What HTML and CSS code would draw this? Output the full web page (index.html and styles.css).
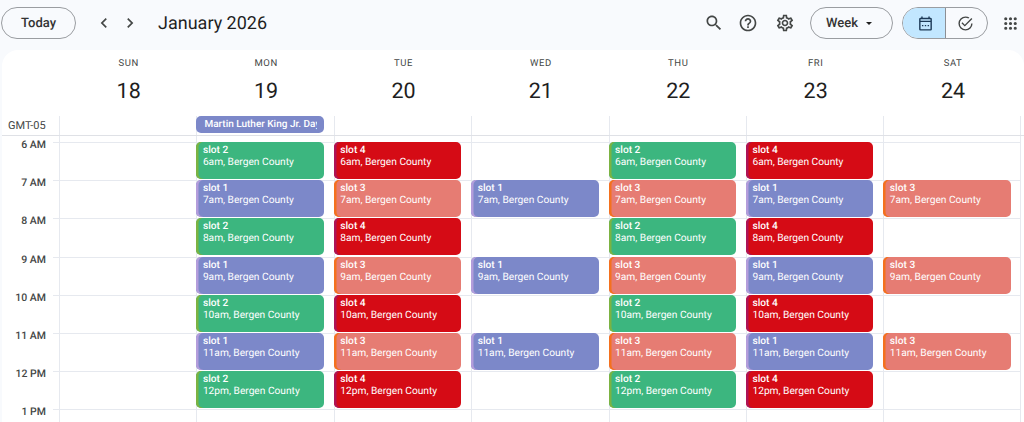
FILE: index.html
```html
<!DOCTYPE html>
<html lang="en">
  <head>
    <meta charset="UTF-8" />
    <title>January 2026</title>
    <link rel="stylesheet" href="styles.css">
  </head>
  <body>
    <header class="topbar">
      <button class="pill today">Today</button>
      <div class="nav">
        <svg viewBox="0 0 24 24"><path d="M15.41 7.41 14 6l-6 6 6 6 1.41-1.41L10.83 12z"/></svg>
        <svg viewBox="0 0 24 24"><path d="M10 6 8.59 7.41 13.17 12l-4.58 4.59L10 18l6-6z"/></svg>
      </div>
      <h1 class="title">January 2026</h1>
      <div class="tools">
        <svg class="search" viewBox="0 0 24 24"><path d="M15.5 14h-.79l-.28-.27C15.41 12.59 16 11.11 16 9.5 16 5.91 13.09 3 9.5 3S3 5.91 3 9.5 5.91 16 9.5 16c1.61 0 3.09-.59 4.23-1.57l.27.28v.79l5 4.99L20.49 19l-4.99-5zm-6 0C7.01 14 5 11.99 5 9.5S7.01 5 9.5 5 14 7.01 14 9.5 11.99 14 9.5 14z"/></svg>
        <svg viewBox="0 0 24 24"><path d="M11 18h2v-2h-2v2zm1-16C6.48 2 2 6.48 2 12s4.48 10 10 10 10-4.48 10-10S17.52 2 12 2zm0 18c-4.41 0-8-3.59-8-8s3.59-8 8-8 8 3.59 8 8-3.59 8-8 8zm0-14c-2.21 0-4 1.79-4 4h2c0-1.1.9-2 2-2s2 .9 2 2c0 2-3 1.75-3 5h2c0-2.25 3-2.5 3-5 0-2.21-1.79-4-4-4z"/></svg>
        <svg class="gear" viewBox="0 0 24 24"><path d="M19.43 12.98c.04-.32.07-.64.07-.98 0-.34-.03-.66-.07-.98l2.11-1.65c.19-.15.24-.42.12-.64l-2-3.46c-.09-.16-.26-.25-.44-.25-.06 0-.12.01-.17.03l-2.49 1c-.52-.4-1.08-.73-1.69-.98l-.38-2.65C14.46 2.18 14.25 2 14 2h-4c-.25 0-.46.18-.49.42l-.38 2.65c-.61.25-1.17.59-1.69.98l-2.49-1c-.06-.02-.12-.03-.18-.03-.17 0-.34.09-.43.25l-2 3.46c-.13.22-.07.49.12.64l2.11 1.65c-.04.32-.07.65-.07.98 0 .33.03.66.07.98l-2.11 1.65c-.19.15-.24.42-.12.64l2 3.46c.09.16.26.25.44.25.06 0 .12-.01.17-.03l2.49-1c.52.4 1.08.73 1.69.98l.38 2.65c.03.24.24.42.49.42h4c.25 0 .46-.18.49-.42l.38-2.65c.61-.25 1.17-.59 1.69-.98l2.49 1c.06.02.12.03.18.03.17 0 .34-.09.43-.25l2-3.46c.12-.22.07-.49-.12-.64l-2.11-1.65zm-1.98-1.71c.04.31.05.52.05.73 0 .21-.02.43-.05.73l-.14 1.13.89.7 1.08.84-.7 1.21-1.27-.51-1.04-.42-.9.68c-.43.32-.84.56-1.25.73l-1.06.43-.16 1.13-.2 1.35h-1.4l-.19-1.35-.16-1.13-1.06-.43c-.43-.18-.83-.41-1.23-.71l-.91-.7-1.06.43-1.27.51-.7-1.21 1.08-.84.89-.7-.14-1.13c-.03-.31-.05-.54-.05-.74s.02-.43.05-.73l.14-1.13-.89-.7-1.08-.84.7-1.21 1.27.51 1.04.42.9-.68c.43-.32.84-.56 1.25-.73l1.06-.43.16-1.13.2-1.35h1.39l.19 1.35.16 1.13 1.06.43c.43.18.83.41 1.23.71l.91.7 1.06-.43 1.27-.51.7 1.21-1.07.85-.89.7.14 1.13zM12 8c-2.21 0-4 1.79-4 4s1.79 4 4 4 4-1.79 4-4-1.79-4-4-4zm0 6c-1.1 0-2-.9-2-2s.9-2 2-2 2 .9 2 2-.9 2-2 2z"/></svg>
      </div>
      <button class="pill week">Week <span class="caret"></span></button>
      <div class="toggle">
        <span class="toggle-on">
          <svg viewBox="0 0 24 24"><path d="M19 4h-1V2h-2v2H8V2H6v2H5a2 2 0 0 0-2 2v14a2 2 0 0 0 2 2h14a2 2 0 0 0 2-2V6a2 2 0 0 0-2-2zm0 16H5V10h14v10zm0-12H5V6h14v2zM7 14h2v2H7zm4 0h2v2h-2zm4 0h2v2h-2z"/></svg>
        </span>
        <span class="toggle-off">
          <svg viewBox="0 0 24 24"><path d="M12 2a10 10 0 1 0 10 10h-2a8 8 0 1 1-8-8c1.5 0 2.9.4 4.1 1.1l1.4-1.5A10 10 0 0 0 12 2zm8.3 2.3L11 13.6l-3.3-3.3-1.4 1.4 4.7 4.7L21.7 5.7z"/></svg>
        </span>
      </div>
      <svg class="apps" viewBox="0 0 24 24"><path d="M6 8a2 2 0 1 0 0-4 2 2 0 0 0 0 4zm6 0a2 2 0 1 0 0-4 2 2 0 0 0 0 4zm6 0a2 2 0 1 0 0-4 2 2 0 0 0 0 4zM6 14a2 2 0 1 0 0-4 2 2 0 0 0 0 4zm6 0a2 2 0 1 0 0-4 2 2 0 0 0 0 4zm6 0a2 2 0 1 0 0-4 2 2 0 0 0 0 4zM6 20a2 2 0 1 0 0-4 2 2 0 0 0 0 4zm6 0a2 2 0 1 0 0-4 2 2 0 0 0 0 4zm6 0a2 2 0 1 0 0-4 2 2 0 0 0 0 4z"/></svg>
    </header>

    <main class="card">
      <div class="days">
        <div class="day-head"><span class="dow">SUN</span><span class="dom">18</span></div>
        <div class="day-head"><span class="dow">MON</span><span class="dom">19</span></div>
        <div class="day-head"><span class="dow">TUE</span><span class="dom">20</span></div>
        <div class="day-head"><span class="dow">WED</span><span class="dom">21</span></div>
        <div class="day-head"><span class="dow">THU</span><span class="dom">22</span></div>
        <div class="day-head"><span class="dow">FRI</span><span class="dom">23</span></div>
        <div class="day-head"><span class="dow">SAT</span><span class="dom">24</span></div>
      </div>

      <div class="allday">
        <div class="zone">GMT-05</div>
        <div class="allday-cell"></div>
        <div class="allday-cell"><div class="holiday"><span>Martin Luther King Jr. Day</span></div></div>
        <div class="allday-cell"></div>
        <div class="allday-cell"></div>
        <div class="allday-cell"></div>
        <div class="allday-cell"></div>
        <div class="allday-cell"></div>
      </div>

      <div class="grid">
        <div class="gutter">
          <div class="time"><span>6 AM</span></div>
          <div class="time"><span>7 AM</span></div>
          <div class="time"><span>8 AM</span></div>
          <div class="time"><span>9 AM</span></div>
          <div class="time"><span>10 AM</span></div>
          <div class="time"><span>11 AM</span></div>
          <div class="time"><span>12 PM</span></div>
          <div class="time"><span>1 PM</span></div>
        </div>

        <div class="col">
          <div class="hour"></div><div class="hour"></div><div class="hour"></div><div class="hour"></div>
          <div class="hour"></div><div class="hour"></div><div class="hour"></div><div class="hour"></div>
        </div>

        <div class="col">
          <div class="hour"><div class="ev green"><b>slot 2</b><span>6am, Bergen County</span></div></div>
          <div class="hour"><div class="ev blue"><b>slot 1</b><span>7am, Bergen County</span></div></div>
          <div class="hour"><div class="ev green"><b>slot 2</b><span>8am, Bergen County</span></div></div>
          <div class="hour"><div class="ev blue"><b>slot 1</b><span>9am, Bergen County</span></div></div>
          <div class="hour"><div class="ev green"><b>slot 2</b><span>10am, Bergen County</span></div></div>
          <div class="hour"><div class="ev blue"><b>slot 1</b><span>11am, Bergen County</span></div></div>
          <div class="hour"><div class="ev green"><b>slot 2</b><span>12pm, Bergen County</span></div></div>
          <div class="hour"></div>
        </div>

        <div class="col">
          <div class="hour"><div class="ev red"><b>slot 4</b><span>6am, Bergen County</span></div></div>
          <div class="hour"><div class="ev salmon"><b>slot 3</b><span>7am, Bergen County</span></div></div>
          <div class="hour"><div class="ev red"><b>slot 4</b><span>8am, Bergen County</span></div></div>
          <div class="hour"><div class="ev salmon"><b>slot 3</b><span>9am, Bergen County</span></div></div>
          <div class="hour"><div class="ev red"><b>slot 4</b><span>10am, Bergen County</span></div></div>
          <div class="hour"><div class="ev salmon"><b>slot 3</b><span>11am, Bergen County</span></div></div>
          <div class="hour"><div class="ev red"><b>slot 4</b><span>12pm, Bergen County</span></div></div>
          <div class="hour"></div>
        </div>

        <div class="col">
          <div class="hour"></div>
          <div class="hour"><div class="ev blue"><b>slot 1</b><span>7am, Bergen County</span></div></div>
          <div class="hour"></div>
          <div class="hour"><div class="ev blue"><b>slot 1</b><span>9am, Bergen County</span></div></div>
          <div class="hour"></div>
          <div class="hour"><div class="ev blue"><b>slot 1</b><span>11am, Bergen County</span></div></div>
          <div class="hour"></div>
          <div class="hour"></div>
        </div>

        <div class="col">
          <div class="hour"><div class="ev green"><b>slot 2</b><span>6am, Bergen County</span></div></div>
          <div class="hour"><div class="ev salmon"><b>slot 3</b><span>7am, Bergen County</span></div></div>
          <div class="hour"><div class="ev green"><b>slot 2</b><span>8am, Bergen County</span></div></div>
          <div class="hour"><div class="ev salmon"><b>slot 3</b><span>9am, Bergen County</span></div></div>
          <div class="hour"><div class="ev green"><b>slot 2</b><span>10am, Bergen County</span></div></div>
          <div class="hour"><div class="ev salmon"><b>slot 3</b><span>11am, Bergen County</span></div></div>
          <div class="hour"><div class="ev green"><b>slot 2</b><span>12pm, Bergen County</span></div></div>
          <div class="hour"></div>
        </div>

        <div class="col">
          <div class="hour"><div class="ev red"><b>slot 4</b><span>6am, Bergen County</span></div></div>
          <div class="hour"><div class="ev blue"><b>slot 1</b><span>7am, Bergen County</span></div></div>
          <div class="hour"><div class="ev red"><b>slot 4</b><span>8am, Bergen County</span></div></div>
          <div class="hour"><div class="ev blue"><b>slot 1</b><span>9am, Bergen County</span></div></div>
          <div class="hour"><div class="ev red"><b>slot 4</b><span>10am, Bergen County</span></div></div>
          <div class="hour"><div class="ev blue"><b>slot 1</b><span>11am, Bergen County</span></div></div>
          <div class="hour"><div class="ev red"><b>slot 4</b><span>12pm, Bergen County</span></div></div>
          <div class="hour"></div>
        </div>

        <div class="col last">
          <div class="hour"></div>
          <div class="hour"><div class="ev salmon"><b>slot 3</b><span>7am, Bergen County</span></div></div>
          <div class="hour"></div>
          <div class="hour"><div class="ev salmon"><b>slot 3</b><span>9am, Bergen County</span></div></div>
          <div class="hour"></div>
          <div class="hour"><div class="ev salmon"><b>slot 3</b><span>11am, Bergen County</span></div></div>
          <div class="hour"></div>
          <div class="hour"></div>
        </div>
      </div>
    </main>
  </body>
</html>
```

FILE: styles.css
```css
* {
  box-sizing: border-box;
}

body {
  margin: 0;
  height: 422px;
  overflow: hidden;
  background: #f8fafd;
  color: #1f1f1f;
  font-family: Roboto, "Liberation Sans", sans-serif;
  text-rendering: geometricPrecision;
}

.topbar {
  display: flex;
  align-items: center;
  height: 50px;
  padding: 0 4.5px 4px 1px;
}

.topbar svg {
  display: block;
  fill: #444746;
}

.pill {
  height: 32px;
  border: 1px solid #9a9da1;
  border-radius: 16px;
  background: transparent;
  color: #333;
  font-family: inherit;
  font-size: 13px;
  font-weight: 500;
  text-rendering: geometricPrecision;
}

.today {
  width: 75px;
}

.nav {
  display: flex;
  gap: 6px;
  margin-left: 18px;
}

.nav svg {
  width: 20px;
  height: 20px;
}

.title {
  margin: 0 0 0 18px;
  font-size: 18px;
  font-weight: 400;
}

.tools {
  display: flex;
  align-items: center;
  gap: 14px;
  margin-left: auto;
}

.tools svg {
  width: 20px;
  height: 20px;
}

.tools .gear {
  margin-left: 3px;
}

.week {
  display: flex;
  align-items: center;
  gap: 8px;
  width: 83px;
  margin-left: 15px;
  padding-left: 15px;
}

.caret {
  width: 0;
  height: 0;
  border-left: 3.5px solid transparent;
  border-right: 3.5px solid transparent;
  border-top: 3.5px solid #1f1f1f;
}

.toggle {
  display: flex;
  width: 86px;
  height: 32px;
  margin-left: 9px;
  border: 1px solid #9a9da1;
  border-radius: 16px;
  overflow: hidden;
}

.toggle span {
  display: flex;
  align-items: center;
  justify-content: center;
}

.toggle-on {
  width: 43px;
  padding-left: 2px;
  background: #c2e7ff;
  border-right: 1px solid #8c8f94;
}

.toggle-off {
  flex: 1;
  padding-right: 3px;
}

.topbar .toggle-on svg {
  fill: #1c3a57;
}

.toggle svg {
  width: 17px;
  height: 17px;
}

.topbar .apps {
  width: 19px;
  height: 19px;
  margin-left: 12.5px;
}

.card {
  margin-left: 2px;
  height: 372px;
  overflow: hidden;
  background: #fff;
  border-radius: 16px 16px 0 0;
}

.days {
  display: grid;
  grid-template-columns: repeat(7, 137.4px);
  margin-left: 57px;
  height: 66px;
}

.day-head {
  display: flex;
  flex-direction: column;
  align-items: center;
  padding: 8px 0 0 2px;
  color: #444746;
}

.dow {
  font-size: 9.5px;
  letter-spacing: 0.6px;
  line-height: 12px;
}

.dom {
  margin-top: 8px;
  color: #1f1f1f;
  font-size: 21.5px;
  line-height: 28px;
}

.allday {
  display: grid;
  grid-template-columns: 57px repeat(7, 137.4px);
  height: 20px;
  border-bottom: 1px solid #dfe1e6;
}

.zone {
  padding: 3px 0 0 6px;
  color: #444746;
  font-size: 11px;
  line-height: 13px;
}

.allday-cell {
  border-left: 1px solid #e6e9ef;
}

.allday-cell:last-child {
  border-right: 1px solid #e6e9ef;
}

.holiday {
  width: 128px;
  height: 17px;
  margin-left: -1px;
  padding: 0 7px 0 8px;
  border-radius: 5px;
  background: #7c88c9;
  color: #fff;
  font-size: 10px;
  font-weight: 500;
  line-height: 17px;
}

.holiday span {
  display: block;
  overflow: hidden;
  white-space: nowrap;
}

.grid {
  display: grid;
  grid-template-columns: 57px repeat(7, 137.4px);
}

.gutter {
  padding-top: 6px;
}

.time {
  display: flex;
  height: 38.2px;
}

.time span {
  flex: 1;
  margin-top: -4px;
  padding-right: 7px;
  color: #444746;
  font-size: 10.5px;
  font-weight: 500;
  line-height: 13px;
  text-align: right;
}

.time::after {
  content: "";
  width: 6px;
  border-top: 1px solid #e6e9ef;
}

.col {
  padding-top: 6px;
  border-left: 1px solid #e6e9ef;
}

.col.last {
  border-right: 1px solid #e6e9ef;
}

.hour {
  height: 38.2px;
  border-top: 1px solid #e6e9ef;
}

.ev {
  display: flex;
  flex-direction: column;
  width: 127.4px;
  height: 37px;
  margin: -1px 0 0 -1px;
  padding: 3px 4px 0 6.5px;
  overflow: hidden;
  border-radius: 5px;
  color: #fff;
  font-size: 10.2px;
  line-height: 12px;
  white-space: nowrap;
}

.ev b {
  font-weight: 500;
}

.green {
  background: #3cb67f;
  box-shadow: inset 2.5px 0 0 #7cb342;
}

.blue {
  background: #7c88c9;
  box-shadow: inset 2.5px 0 0 #b39ddb;
}

.red {
  background: #d50b15;
  box-shadow: inset 2.5px 0 0 #ad1457;
}

.salmon {
  background: #e67c73;
  box-shadow: inset 2.5px 0 0 #f4711e;
}
```
